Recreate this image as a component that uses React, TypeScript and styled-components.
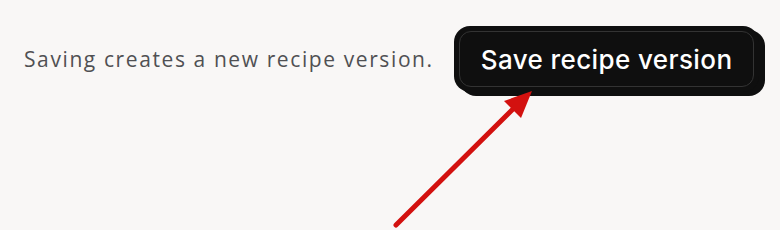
import * as React from "react";
import styled, { createGlobalStyle } from "styled-components";

const GlobalStyle = createGlobalStyle`
  html, body {
    margin: 0;
    padding: 0;
    background: #f9f7f6;
  }
  body {
    width: 780px;
    height: 230px;
    overflow: hidden;
  }
`;

const Page = styled.div`
  position: relative;
  width: 780px;
  height: 230px;
  box-sizing: border-box;
  padding: 26px 0 0 24px;
  background: #f9f7f6;
`;

const Row = styled.div`
  display: flex;
  align-items: center;
  gap: 20px;
`;

const Note = styled.span`
  font-family: "Open Sans", "Liberation Sans", sans-serif;
  font-size: 21px;
  color: #505053;
  letter-spacing: 1.6px;
  white-space: nowrap;
`;

const SaveButton = styled.button`
  position: relative;
  height: 66px;
  padding: 0 27px;
  border: none;
  border-radius: 16px;
  background: #0f0f0f;
  box-shadow: 6px 4px 0 #0f0f0f;
  color: #ffffff;
  font-family: Inter, "Liberation Sans", sans-serif;
  font-size: 26px;
  font-weight: 500;
  letter-spacing: 0.4px;
  white-space: nowrap;
  cursor: pointer;

  &::after {
    content: "";
    position: absolute;
    inset: 5px;
    border: 1px solid #333333;
    border-radius: 12px;
    pointer-events: none;
  }
`;

const Arrow = styled.svg`
  position: absolute;
  left: 0;
  top: 0;
  pointer-events: none;
`;

const App: React.FC = () => (
  <Page>
    <GlobalStyle />
    <Row>
      <Note>Saving creates a new recipe version.</Note>
      <SaveButton>Save recipe version</SaveButton>
    </Row>
    <Arrow width="780" height="230" viewBox="0 0 780 230">
      <line
        x1="396"
        y1="225"
        x2="515"
        y2="107"
        stroke="#d3110f"
        strokeWidth="5"
        strokeLinecap="round"
      />
      <polygon points="532,91 504,101 521,118" fill="#d3110f" />
    </Arrow>
  </Page>
);

export default App;
